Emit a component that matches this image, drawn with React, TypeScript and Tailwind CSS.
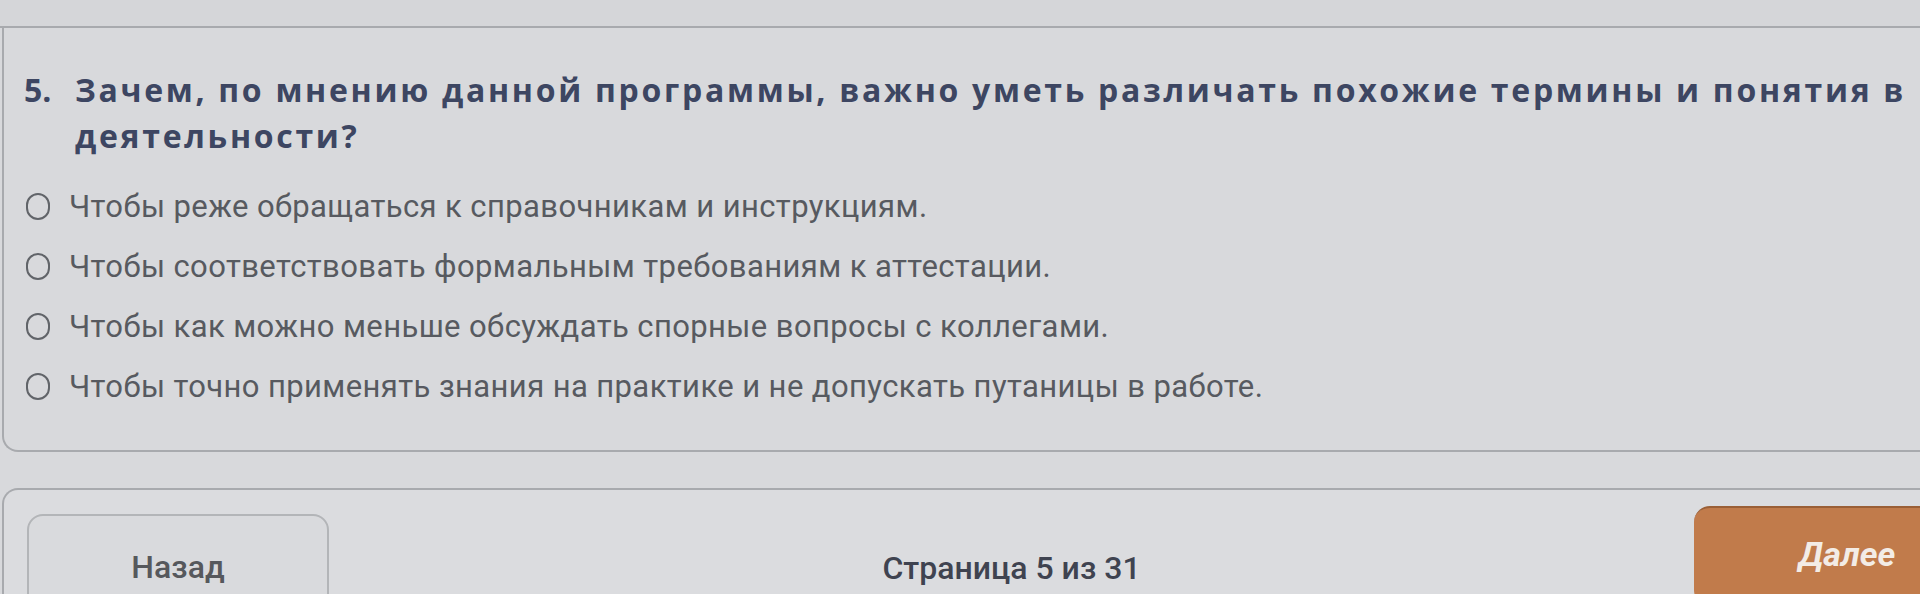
import React from "react"

const options = [
  "Чтобы реже обращаться к справочникам и инструкциям.",
  "Чтобы соответствовать формальным требованиям к аттестации.",
  "Чтобы как можно меньше обсуждать спорные вопросы с коллегами.",
  "Чтобы точно применять знания на практике и не допускать путаницы в работе.",
]

export default function App() {
  return (
    <div className="relative h-[594px] w-full overflow-hidden bg-[#d8d9dc] font-['Roboto',sans-serif]">
      {/* top strip */}
      <div className="h-[28px] border-b-2 border-[#a8aaae] bg-[#d5d6d9]" />

      {/* question card */}
      <div className="ml-[2px] rounded-bl-2xl border-b-2 border-l-2 border-[#a8aaae] pb-[34px] pt-[39px]">
        <div className="flex font-['Open_Sans',sans-serif] text-[32px] font-bold leading-[46px] tracking-[2.7px] text-[#3d4662]">
          <span className="w-[71px] shrink-0 pl-[20px] tracking-normal">5.</span>
          <p>
            Зачем, по мнению данной программы, важно уметь различать похожие термины и понятия в деятельности?
          </p>
        </div>

        <div className="mt-[17px] flex flex-col">
          {options.map((o) => (
            <label key={o} className="flex h-[60px] items-center">
              <span className="ml-[22px] h-[27px] w-[24px] shrink-0 rounded-full border-[2.5px] border-[#616469]" />
              <span className="ml-[19px] text-[31px] leading-none tracking-[0.4px] text-[#575a60]">{o}</span>
            </label>
          ))}
        </div>
      </div>

      {/* navigation */}
      <div className="ml-[2px] mt-[36px] flex h-[120px] items-start rounded-tl-2xl border-l-2 border-t-2 border-[#a8aaae] bg-[#dbdcdf] pl-[23px]">
        <button className="mt-[24px] flex h-[100px] w-[302px] shrink-0 justify-center rounded-2xl border-2 border-[#b3b5b8] bg-[#d9dadd] pt-[35px] text-[32px] font-medium leading-none text-[#56585c]">
          Назад
        </button>
        <div className="flex flex-1 justify-center pt-[62px] text-[32px] font-medium leading-none text-[#3f4350]">
          Страница 5 из 31
        </div>
        <button className="-mr-[80px] mt-[16px] flex h-[100px] w-[306px] shrink-0 justify-center rounded-2xl border-t-2 border-[#9a5f36] bg-[#c17b4b] pt-[29px] text-[34px] font-bold italic leading-none text-[#f3ece6]">
          Далее
        </button>
      </div>
    </div>
  )
}
